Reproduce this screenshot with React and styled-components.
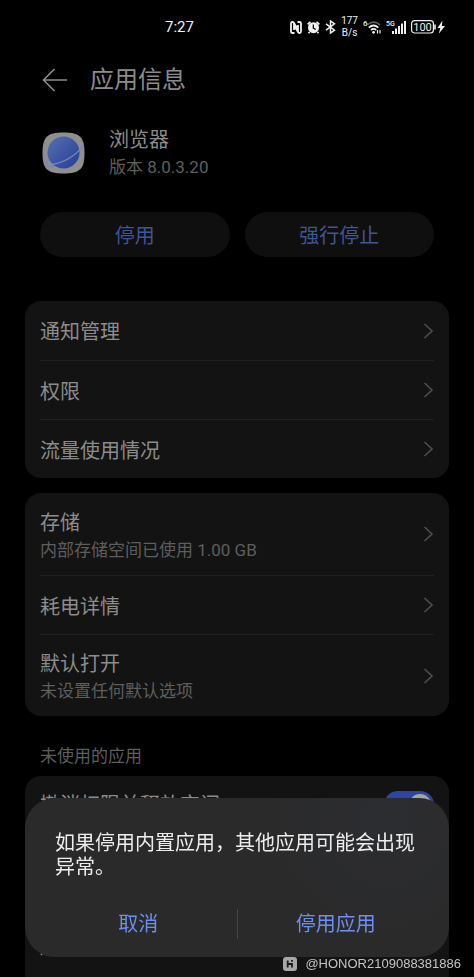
import React from 'react';
import styled, { createGlobalStyle } from 'styled-components';

const GlobalStyle = createGlobalStyle`
    * {
        box-sizing: border-box;
    }

    body {
        margin: 0;
        background-color: #000;
        font-family: Roboto, "Noto Sans CJK SC", sans-serif;
    }

    button {
        margin: 0;
        border: 0;
        padding: 0;
        font: inherit;
        background: none;
        cursor: pointer;
    }

    h1, h2, p {
        margin: 0;
        font-weight: 400;
    }
`;

const Screen = styled.div`
    display: flex;
    min-height: 100vh;
    flex-direction: column;
    padding: 0 25px;
    color: #8c8c8c;
`;

const StatusBar = styled.div`
    display: flex;
    height: 54px;
    align-items: center;
    justify-content: space-between;
    padding: 0 4px 0 140px;
    color: #f0f0f0;
`;

const Clock = styled.span`
    font-size: 15px;
`;

const StatusIcons = styled.div`
    display: flex;
    gap: 5px;
    align-items: center;
`;

const Speed = styled.span`
    font-size: 10px;
    line-height: 12px;
    text-align: center;
`;

const Header = styled.header`
    display: flex;
    height: 52px;
    gap: 22px;
    align-items: center;
    padding-left: 17px;
`;

const BackButton = styled.button`
    display: flex;
    color: #8c8c8c;
`;

const Title = styled.h1`
    font-size: 24px;
    line-height: 36px;
`;

const AppInfo = styled.section`
    display: flex;
    gap: 24px;
    align-items: center;
    padding: 20px 17px 0;
`;

const AppName = styled.h2`
    font-size: 20px;
    line-height: 28px;
`;

const SubText = styled.p`
    color: #5e5e5e;
    font-size: 17px;
    line-height: 26px;
`;

const Actions = styled.div`
    display: flex;
    gap: 15px;
    padding: 32px 15px 44px;
`;

const PillButton = styled.button`
    flex: 1;
    height: 45px;
    border-radius: 23px;
    color: #3f5596;
    font-size: 20px;
    background-color: #0f0f0f;
`;

const Card = styled.section`
    flex-grow: ${props => props.$last ? 1 : 0};
    margin-bottom: ${props => props.$last ? 0 : "15px"};
    border-radius: ${props => props.$last ? "16px 16px 0 0" : "16px"};
    padding: 0 15px;
    background-color: #131313;
`;

const Row = styled.button`
    display: flex;
    width: 100%;
    min-height: ${props => props.$tall ? "82px" : "59px"};
    align-items: center;
    justify-content: space-between;
    color: #8c8c8c;
    text-align: left;

    & + & {
        border-top: 1px solid #1f1f1f;
    }
`;

const RowText = styled.span`
    padding-top: 3px;
`;

const SwitchRow = styled.label`
    display: flex;
    height: 58px;
    align-items: center;
    justify-content: space-between;
`;

const RowTitle = styled.span`
    display: block;
    font-size: 20px;
    line-height: 28px;
`;

const Switch = styled.input`
    display: flex;
    width: 50px;
    height: 28px;
    margin: 0;
    align-items: center;
    appearance: none;
    border-radius: 14px;
    padding: 3px;
    justify-content: flex-end;
    background-color: #2e479c;

    &::before {
        content: "";
        width: 22px;
        height: 22px;
        border-radius: 50%;
        background-color: #a5a5a5;
    }
`;

const SectionLabel = styled.p`
    padding: 12px 15px 7px;
    color: #5e5e5e;
    font-size: 17px;
    line-height: 26px;
`;

const TextRow = styled.div`
    display: flex;
    height: 127px;
    align-items: flex-end;
`;

const Dialog = styled.div`
    position: fixed;
    right: 25px;
    bottom: 20px;
    left: 25px;
    border-radius: 30px;
    padding: 33px 0 18px;
    color: #ededed;
    background: radial-gradient(circle at 85% 15%, #2c2d31 0, #2a2a2a 35%);
`;

const Message = styled.p`
    padding: 0 30px;
    font-size: 20px;
    line-height: 24px;
`;

const DialogActions = styled.div`
    display: flex;
    margin-top: 30px;
    padding: 0 15px;
    align-items: center;
`;

const DialogButton = styled.button`
    flex: 1;
    color: #6f8ff0;
    font-size: 20px;
    line-height: 30px;
`;

const Divider = styled.div`
    width: 1px;
    height: 30px;
    background-color: #454545;
`;

const Watermark = styled.div`
    position: fixed;
    right: 13px;
    bottom: 4px;
    display: flex;
    gap: 8px;
    align-items: center;
    color: #c4c4c4;
    font-family: "Liberation Sans", sans-serif;
    font-size: 13px;
    line-height: 18px;
`;

const Chevron = () => (
    <svg width="11" height="16" viewBox="0 0 11 16" fill="none" stroke="#4c4c4c" strokeWidth="1.7">
        <path d="M1.500 1L9 8l-7.500 7"/>
    </svg>
);

const NfcIcon = () => (
    <svg width="12" height="13" viewBox="0 0 12 13" fill="none" stroke="currentColor" strokeWidth="1.8">
        <path d="M4.500 12H2.500Q1 12 1 10.500V2.500Q1 1 2.500 1q.8 0 1.300.8L8 8.500V4"/>
        <path d="M7.500 1h2Q11 1 11 2.500v8q0 1.500-1.500 1.500-.8 0-1.300-.8L4 4.500V9"/>
    </svg>
);

const AlarmIcon = () => (
    <svg width="13" height="13" viewBox="0 0 13 13">
        <circle cx="6.5" cy="6.7" r="5.5" fill="currentColor"/>
        <path d="M.7 3.4L3.4.9M12.3 3.4L9.6.9M2.6 11l-1 1.3M10.4 11l1 1.3" stroke="currentColor" strokeWidth="1.8"/>
        <path d="M6.3 3.5v3.6l2.4 1.4" fill="none" stroke="#000" strokeWidth="1.2"/>
    </svg>
);

const BluetoothIcon = () => (
    <svg width="11" height="14" viewBox="0 0 11 14" fill="none" stroke="currentColor" strokeWidth="1.5">
        <path d="M1 3.8l8.5 6.400-4 2.800V1l4 2.800L1 10.200"/>
    </svg>
);

const WifiIcon = () => (
    <svg width="18" height="16" viewBox="0 0 18 16" fill="none" stroke="currentColor">
        <text x="0" y="7" fill="currentColor" stroke="none" fontSize="8" fontWeight="500">6</text>
        <path d="M4.500 5.800Q10.500.5 17 5.800" strokeWidth="1.500" opacity=".4"/>
        <path d="M5.800 8.600q4.700-4.200 9.500 0M8 11q2.600-2.200 5.200 0" strokeWidth="1.800"/>
        <circle cx="10.600" cy="13.300" r="1.400" fill="currentColor" stroke="none"/>
        <path d="M14.500 11v3.500M17 11v3.500" strokeWidth="1.200"/>
    </svg>
);

const SignalIcon = () => (
    <svg width="20" height="16" viewBox="0 0 20 16" fill="currentColor">
        <text x="0" y="7" fontSize="7" fontWeight="500">5G</text>
        <path d="M6 12h2v3H6zM9 9.500h2V15H9zM12 7h2v8h-2zM15 4.500h2V15h-2zM18 2h2v13h-2z"/>
    </svg>
);

const BatteryIcon = () => (
    <svg width="34" height="14" viewBox="0 0 34 14">
        <rect x=".6" y=".6" width="21.800" height="12.400" rx="3" fill="none" stroke="currentColor" strokeWidth="1.200"/>
        <path d="M24 4.500v5" stroke="currentColor" strokeWidth="1.600"/>
        <text x="11.500" y="11" fill="currentColor" fontSize="11" textAnchor="middle">100</text>
        <path d="M31.500.5L26.500 8h2.800l-1.500 5.800L34 6h-3.200z" fill="currentColor"/>
    </svg>
);

const BackIcon = () => (
    <svg width="26" height="24" viewBox="0 0 26 24" fill="none" stroke="currentColor" strokeWidth="1.6">
        <path d="M12.500 1L1.500 12l11 11M1.500 12H25"/>
    </svg>
);

const BrowserIcon = () => (
    <svg width="43" height="42" viewBox="0 0 43 42">
        <defs>
            <linearGradient id="planet" x1="0" y1="0" x2="1" y2="1">
                <stop offset="0" stopColor="#5570b4"/>
                <stop offset="1" stopColor="#263d92"/>
            </linearGradient>
        </defs>
        <path d="M21.500.5C38 .5 42.500 5 42.500 21S38 41.500 21.500 41.500.5 37 .5 21 5 .5 21.500.5z" fill="#8f8f91"/>
        <path d="M6.500 28C1 34 4 36 15 33S38 20 41 14" fill="none" stroke="#7281b0" strokeWidth="1"/>
        <circle cx="21.500" cy="20.500" r="16" fill="url(#planet)"/>
        <path d="M7 32.500C19 32 33 25 40.500 14" fill="none" stroke="#7c8cbc" strokeWidth="1.200"/>
    </svg>
);

const HonorBadge = () => (
    <svg width="14" height="14" viewBox="0 0 14 14">
        <rect width="14" height="14" rx="3" fill="#a8a8a8"/>
        <path d="M4.700 3.500v7M4.700 7h4.200M9 6v4.500M9 3v1.800" fill="none" stroke="#1a1a1a" strokeWidth="1.800"/>
    </svg>
);

const ListRow = ({ title, detail }) => (
    <Row type="button" $tall={!!detail}>
        <RowText>
            <RowTitle>{title}</RowTitle>
            {detail ? <SubText as="span">{detail}</SubText> : null}
        </RowText>
        <Chevron/>
    </Row>
);

export default function App() {
    return (
        <>
            <GlobalStyle/>
            <Screen>
                <StatusBar>
                    <Clock>7:27</Clock>
                    <StatusIcons>
                        <NfcIcon/>
                        <AlarmIcon/>
                        <BluetoothIcon/>
                        <Speed>177<br/>B/s</Speed>
                        <WifiIcon/>
                        <SignalIcon/>
                        <BatteryIcon/>
                    </StatusIcons>
                </StatusBar>
                <Header>
                    <BackButton type="button" aria-label="返回"><BackIcon/></BackButton>
                    <Title>应用信息</Title>
                </Header>
                <AppInfo>
                    <BrowserIcon/>
                    <div>
                        <AppName>浏览器</AppName>
                        <SubText>版本 8.0.3.20</SubText>
                    </div>
                </AppInfo>
                <Actions>
                    <PillButton type="button">停用</PillButton>
                    <PillButton type="button">强行停止</PillButton>
                </Actions>
                <Card>
                    <ListRow title="通知管理"/>
                    <ListRow title="权限"/>
                    <ListRow title="流量使用情况"/>
                </Card>
                <Card>
                    <ListRow title="存储" detail="内部存储空间已使用 1.00 GB"/>
                    <ListRow title="耗电详情"/>
                    <ListRow title="默认打开" detail="未设置任何默认选项"/>
                </Card>
                <SectionLabel>未使用的应用</SectionLabel>
                <Card $last>
                    <SwitchRow>
                        <RowTitle>撤消权限并释放空间</RowTitle>
                        <Switch type="checkbox" role="switch" defaultChecked/>
                    </SwitchRow>
                    <TextRow>
                        <RowTitle>版本</RowTitle>
                    </TextRow>
                </Card>
            </Screen>
            <Dialog role="alertdialog" aria-describedby="message">
                <Message id="message">如果停用内置应用，其他应用可能会出现异常。</Message>
                <DialogActions>
                    <DialogButton type="button">取消</DialogButton>
                    <Divider/>
                    <DialogButton type="button">停用应用</DialogButton>
                </DialogActions>
            </Dialog>
            <Watermark>
                <HonorBadge/>
                <span>@HONOR2109088381886</span>
            </Watermark>
        </>
    );
}
